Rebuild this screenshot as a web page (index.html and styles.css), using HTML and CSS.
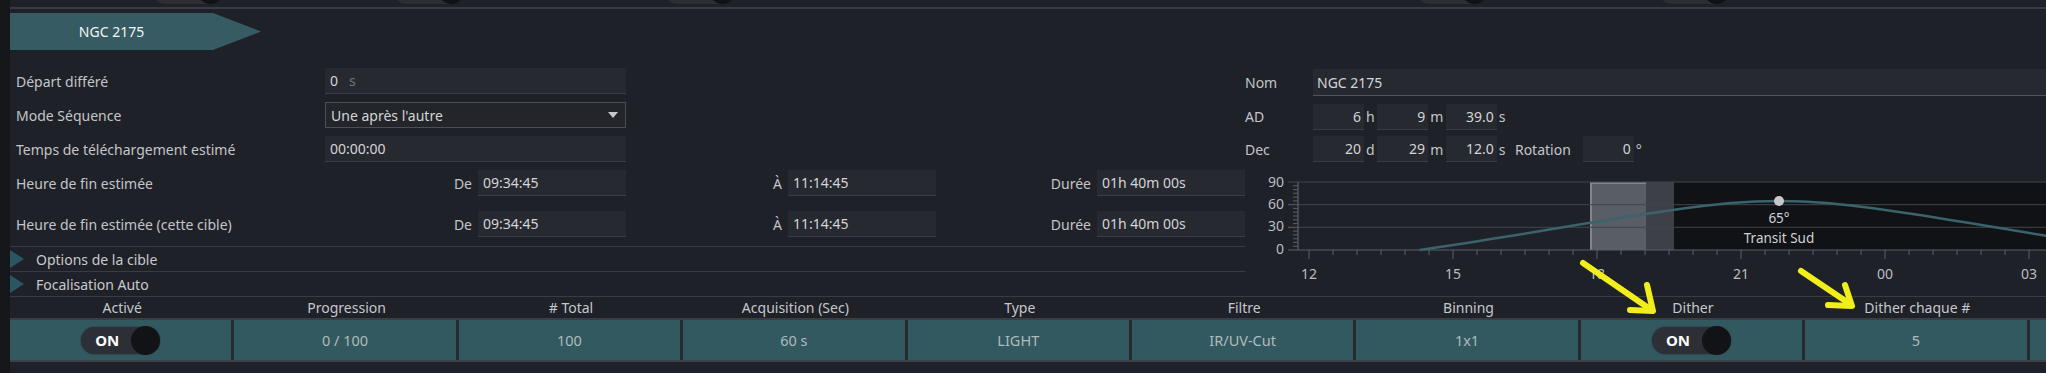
FILE: index.html
```html
<!DOCTYPE html>
<html lang="fr">
<head>
    <meta charset="utf-8">
    <title>NGC 2175 - Séquence</title>
    <link rel="stylesheet" href="styles.css">
</head>
<body>
<div class="app">
    <div class="rail"></div>
    <div class="main">
        <!-- bottom of the toggles from the row above -->
        <div class="prev-row">
            <span class="pill"></span>
            <span class="pill"></span>
            <span class="pill"></span>
            <span class="pill"></span>
            <span class="pill"></span>
        </div>

        <div class="tabbar">
            <div class="tab">NGC 2175</div>
        </div>

        <div class="target">
            <div class="form">
                <div class="row">
                    <span class="lbl">Départ différé</span>
                    <div class="field wide"><span>0</span><span class="suffix">s</span></div>
                </div>
                <div class="row">
                    <span class="lbl">Mode Séquence</span>
                    <div class="field wide select"><span>Une après l'autre</span><span class="caret"></span></div>
                </div>
                <div class="row">
                    <span class="lbl">Temps de téléchargement estimé</span>
                    <div class="field wide">00:00:00</div>
                </div>
                <div class="row times">
                    <span class="lbl">Heure de fin estimée</span>
                    <div class="tcell"><span>De</span><div class="field">09:34:45</div></div>
                    <div class="tcell"><span>À</span><div class="field">11:14:45</div></div>
                    <div class="tcell"><span>Durée</span><div class="field">01h 40m 00s</div></div>
                </div>
                <div class="row times last">
                    <span class="lbl">Heure de fin estimée (cette cible)</span>
                    <div class="tcell"><span>De</span><div class="field">09:34:45</div></div>
                    <div class="tcell"><span>À</span><div class="field">11:14:45</div></div>
                    <div class="tcell"><span>Durée</span><div class="field">01h 40m 00s</div></div>
                </div>
                <div class="expander"><span class="arrow"></span>Options de la cible</div>
                <div class="expander"><span class="arrow"></span>Focalisation Auto</div>
            </div>

            <div class="side">
                <div class="srow">
                    <span class="lbl">Nom</span>
                    <div class="field name">NGC 2175</div>
                </div>
                <div class="srow">
                    <span class="lbl">AD</span>
                    <div class="nf"><div class="field num">6</div><span class="unit">h</span></div>
                    <div class="nf"><div class="field num">9</div><span class="unit">m</span></div>
                    <div class="nf"><div class="field num">39.0</div><span class="unit">s</span></div>
                </div>
                <div class="srow">
                    <span class="lbl">Dec</span>
                    <div class="nf"><div class="field num">20</div><span class="unit">d</span></div>
                    <div class="nf"><div class="field num">29</div><span class="unit">m</span></div>
                    <div class="nf"><div class="field num">12.0</div><span class="unit">s</span></div>
                    <span class="rot">Rotation</span>
                    <div class="nf"><div class="field num">0</div><span class="unit">°</span></div>
                </div>

                <svg class="chart" width="801" height="125" viewBox="1245 171 801 125">
                    <rect x="1674" y="183" width="372" height="68" fill="#111216"/>
                    <rect x="1646" y="183" width="28" height="68" fill="#3d4047"/>
                    <rect x="1590" y="183" width="56" height="68" fill="#585d66"/>
                    <path d="M1591 251V184H1646" fill="none" stroke="#80858d" stroke-width="2"/>
                    <path d="M1288 183H2046M1298 205.7H2046M1298 228.3H2046" stroke="#42454d" stroke-width="1"/>
                    <path d="M1298 183V251M1288 251H2046" stroke="#5b5f67" stroke-width="1.2"/>
                    <path d="M1288 205.7h10M1288 228.3h10
                             M1293 247.2h5M1293 243.4h5M1293 239.7h5M1293 235.9h5M1293 232.1h5
                             M1293 224.6h5M1293 220.8h5M1293 217h5M1293 213.2h5M1293 209.4h5
                             M1293 201.9h5M1293 198.1h5M1293 194.3h5M1293 190.6h5M1293 186.8h5"
                          stroke="#5b5f67" stroke-width="1"/>
                    <path d="M1309 251v9M1333 251v5M1357 251v5M1381 251v5M1405 251v5M1429 251v5
                             M1453 251v9M1477 251v5M1501 251v5M1525 251v5M1549 251v5M1573 251v5
                             M1597 251v9M1621 251v5M1645 251v5M1669 251v5M1693 251v5M1717 251v5
                             M1741 251v9M1765 251v5M1789 251v5M1813 251v5M1837 251v5M1861 251v5
                             M1885 251v9M1909 251v5M1933 251v5M1957 251v5M1981 251v5M2005 251v5
                             M2029 251v9"
                          stroke="#5b5f67" stroke-width="1"/>
                    <polyline fill="none" stroke="#3b636c" stroke-width="2.5" stroke-linejoin="round"
                              points="1419.5,251 1443,247.5 1467,243.9 1491,240 1515,236.2 1539,232.3 1563,228.3 1587,224.3 1611,220.4 1635,216.5 1659,212.9 1683,209.5 1707,206.5 1731,204.1 1755,202.4 1779,201.9 1803,202.4 1827,204.1 1851,206.5 1875,209.5 1899,212.9 1923,216.5 1947,220.4 1971,224.3 1995,228.3 2019,232.3 2043,236.2 2067,240"/>
                    <circle cx="1779" cy="202" r="5" fill="#c6c8cc"/>
                    <g class="ylab">
                        <text x="1284" y="184">90</text>
                        <text x="1284" y="206">60</text>
                        <text x="1284" y="228">30</text>
                        <text x="1284" y="251">0</text>
                    </g>
                    <g class="xlab">
                        <text x="1309" y="276">12</text>
                        <text x="1453" y="276">15</text>
                        <text x="1597" y="276">18</text>
                        <text x="1741" y="276">21</text>
                        <text x="1885" y="276">00</text>
                        <text x="2029" y="276">03</text>
                    </g>
                    <g class="note">
                        <text x="1779" y="220">65°</text>
                        <text x="1779" y="240">Transit Sud</text>
                    </g>
                </svg>
            </div>
        </div>

        <div class="seq">
            <div class="thead">
                <div>Activé</div>
                <div>Progression</div>
                <div># Total</div>
                <div>Acquisition (Sec)</div>
                <div>Type</div>
                <div>Filtre</div>
                <div>Binning</div>
                <div>Dither</div>
                <div>Dither chaque #</div>
                <div></div>
            </div>
            <div class="trow">
                <div><span class="toggle">ON</span></div>
                <div>0 / 100</div>
                <div>100</div>
                <div>60 s</div>
                <div>LIGHT</div>
                <div>IR/UV-Cut</div>
                <div>1x1</div>
                <div><span class="toggle">ON</span></div>
                <div>5</div>
                <div></div>
            </div>
        </div>
    </div>

    <!-- yellow annotation arrows drawn over the screenshot -->
    <svg class="marks" width="2046" height="373" viewBox="0 0 2046 373">
        <g fill="none" stroke="#f2ee1b" stroke-width="6" stroke-linecap="round" stroke-linejoin="round">
            <path d="M1583 263L1650 309"/>
            <path d="M1647 285L1653 311L1630 310"/>
            <path d="M1801 271L1850 304"/>
            <path d="M1845 285L1852 306L1828 305"/>
        </g>
    </svg>
</div>
</body>
</html>
```

FILE: styles.css
```css
* {
    box-sizing: border-box;
}
body {
    margin: 0;
    width: 2046px;
    height: 373px;
    overflow: hidden;
    background-color: #1f2129;
    color: #c4c5c8;
    font-family: "Noto Sans", "Open Sans", sans-serif;
    font-size: 14px;
}
.app {
    position: relative;
    display: flex;
    height: 373px;
}
.rail {
    width: 10px;
    flex: none;
    background-color: #16171b;
}
.main {
    flex: 1;
    min-width: 0;
}

/* row of toggles cut off at the top */
.prev-row {
    display: flex;
    height: 9px;
    overflow: hidden;
    border-bottom: 2px solid #383b41;
}
.pill {
    position: relative;
    flex: none;
    width: 72px;
    height: 28px;
    margin-top: -24px;
    border-radius: 14px;
    background-color: #2c2e34;
}
.pill::after {
    content: "";
    position: absolute;
    right: 0;
    top: 0;
    width: 27px;
    height: 28px;
    border-radius: 50%;
    background-color: #111216;
}
.pill:nth-child(1) { margin-left: 142px; }
.pill:nth-child(2) { margin-left: 169px; }
.pill:nth-child(3) { margin-left: 199px; }
.pill:nth-child(4) { margin-left: 680px; }
.pill:nth-child(5) { margin-left: 170px; }

.tabbar {
    height: 41px;
    padding-top: 4px;
}
.tab {
    width: 251px;
    height: 37px;
    padding-right: 48px;
    line-height: 37px;
    text-align: center;
    color: #f2f4f4;
    background-color: #365b62;
    clip-path: polygon(0 0, 203px 0, 100% 50%, 203px 100%, 0 100%);
}

.target {
    display: flex;
    height: 246px;
}
.form {
    width: 1235px;
    flex: none;
    padding-top: 18px;
}
.row {
    display: flex;
    align-items: center;
    height: 26px;
    margin-bottom: 8px;
}
.row.times {
    margin-bottom: 15px;
}
.row.last {
    margin-bottom: 9px;
}
.lbl {
    flex: none;
    width: 315px;
    padding-left: 6px;
}
.field {
    display: flex;
    align-items: center;
    height: 26px;
    padding: 0 5px;
    background-color: #272930;
    border-bottom: 1px solid #3a3d44;
    color: #d4d4d6;
    white-space: nowrap;
}
.field.wide {
    width: 301px;
}
.suffix {
    margin-left: 11px;
    color: #73767d;
}
.select {
    justify-content: space-between;
    border: 1px solid #4b4e55;
    background-color: #23252b;
}
.caret {
    width: 0;
    height: 0;
    margin-right: 2px;
    border-left: 5px solid transparent;
    border-right: 5px solid transparent;
    border-top: 6px solid #c8c8ca;
}
.tcell {
    display: flex;
    align-items: center;
    justify-content: flex-end;
    gap: 6px;
    flex: none;
}
.tcell:nth-of-type(1) { width: 301px; }
.tcell:nth-of-type(2) { width: 310px; }
.tcell:nth-of-type(3) { width: 309px; }
.tcell .field {
    width: 148px;
}
.expander {
    display: flex;
    align-items: center;
    height: 25px;
    border-top: 1px solid #383b42;
    color: #c8c9cc;
}
.arrow {
    width: 0;
    height: 0;
    margin-right: 12px;
    border-left: 14px solid #2b5562;
    border-top: 9px solid transparent;
    border-bottom: 9px solid transparent;
}

/* target coordinates + altitude chart */
.side {
    flex: 1;
    min-width: 0;
    padding-top: 19px;
}
.srow {
    display: flex;
    align-items: center;
    height: 27px;
    margin-bottom: 7px;
}
.srow:nth-child(2) {
    margin-bottom: 6px;
}
.srow:nth-child(3) {
    height: 26px;
    margin-bottom: 8px;
}
.srow .lbl {
    width: 68px;
    padding-left: 0;
}
.field.name {
    flex: 1;
    height: 27px;
    padding-left: 4px;
    border-bottom-color: #50535a;
}
.nf {
    display: flex;
    align-items: center;
    margin-right: 3px;
}
.field.num {
    width: 51px;
    justify-content: flex-end;
    padding-right: 3px;
}
.unit {
    margin-left: 2px;
    letter-spacing: -0.5px;
}
.rot {
    margin: 0 12px 0 7px;
}
.chart {
    display: block;
}
.chart text {
    font-family: "Noto Sans", "Open Sans", sans-serif;
    font-size: 14px;
    fill: #bcbdc1;
    dominant-baseline: middle;
}
.ylab text {
    text-anchor: end;
}
.xlab text,
.note text {
    text-anchor: middle;
}
.note text {
    fill: #d0d1d4;
    font-size: 13.5px;
}

/* sequence table */
.seq {
    border-top: 1px solid #393c42;
}
.thead,
.trow {
    display: grid;
    grid-template-columns: repeat(10, 224.4px);
}
.thead {
    height: 23px;
    border-bottom: 2px solid #3a3d43;
}
.thead div {
    line-height: 21px;
    text-align: center;
    color: #c6c7ca;
    white-space: nowrap;
}
.trow {
    height: 42px;
    border-bottom: 2px solid #3d4046;
}
.trow div {
    display: flex;
    align-items: center;
    justify-content: center;
    background-color: #335960;
    border-right: 3px solid #272a2f;
    color: #aebbbd;
    font-size: 14.5px;
}
.toggle {
    position: relative;
    width: 79px;
    height: 27px;
    padding-left: 14px;
    border-radius: 14px;
    background-color: #2c2f35;
    color: #ffffff;
    font-weight: bold;
    font-size: 15px;
    line-height: 27px;
    box-shadow: 0 0 2px rgba(0, 0, 0, 0.5);
}
.toggle::after {
    content: "";
    position: absolute;
    right: 0;
    top: -1px;
    width: 29px;
    height: 29px;
    border-radius: 50%;
    background-color: #121317;
}

.marks {
    position: absolute;
    left: 0;
    top: 0;
    pointer-events: none;
}
```
